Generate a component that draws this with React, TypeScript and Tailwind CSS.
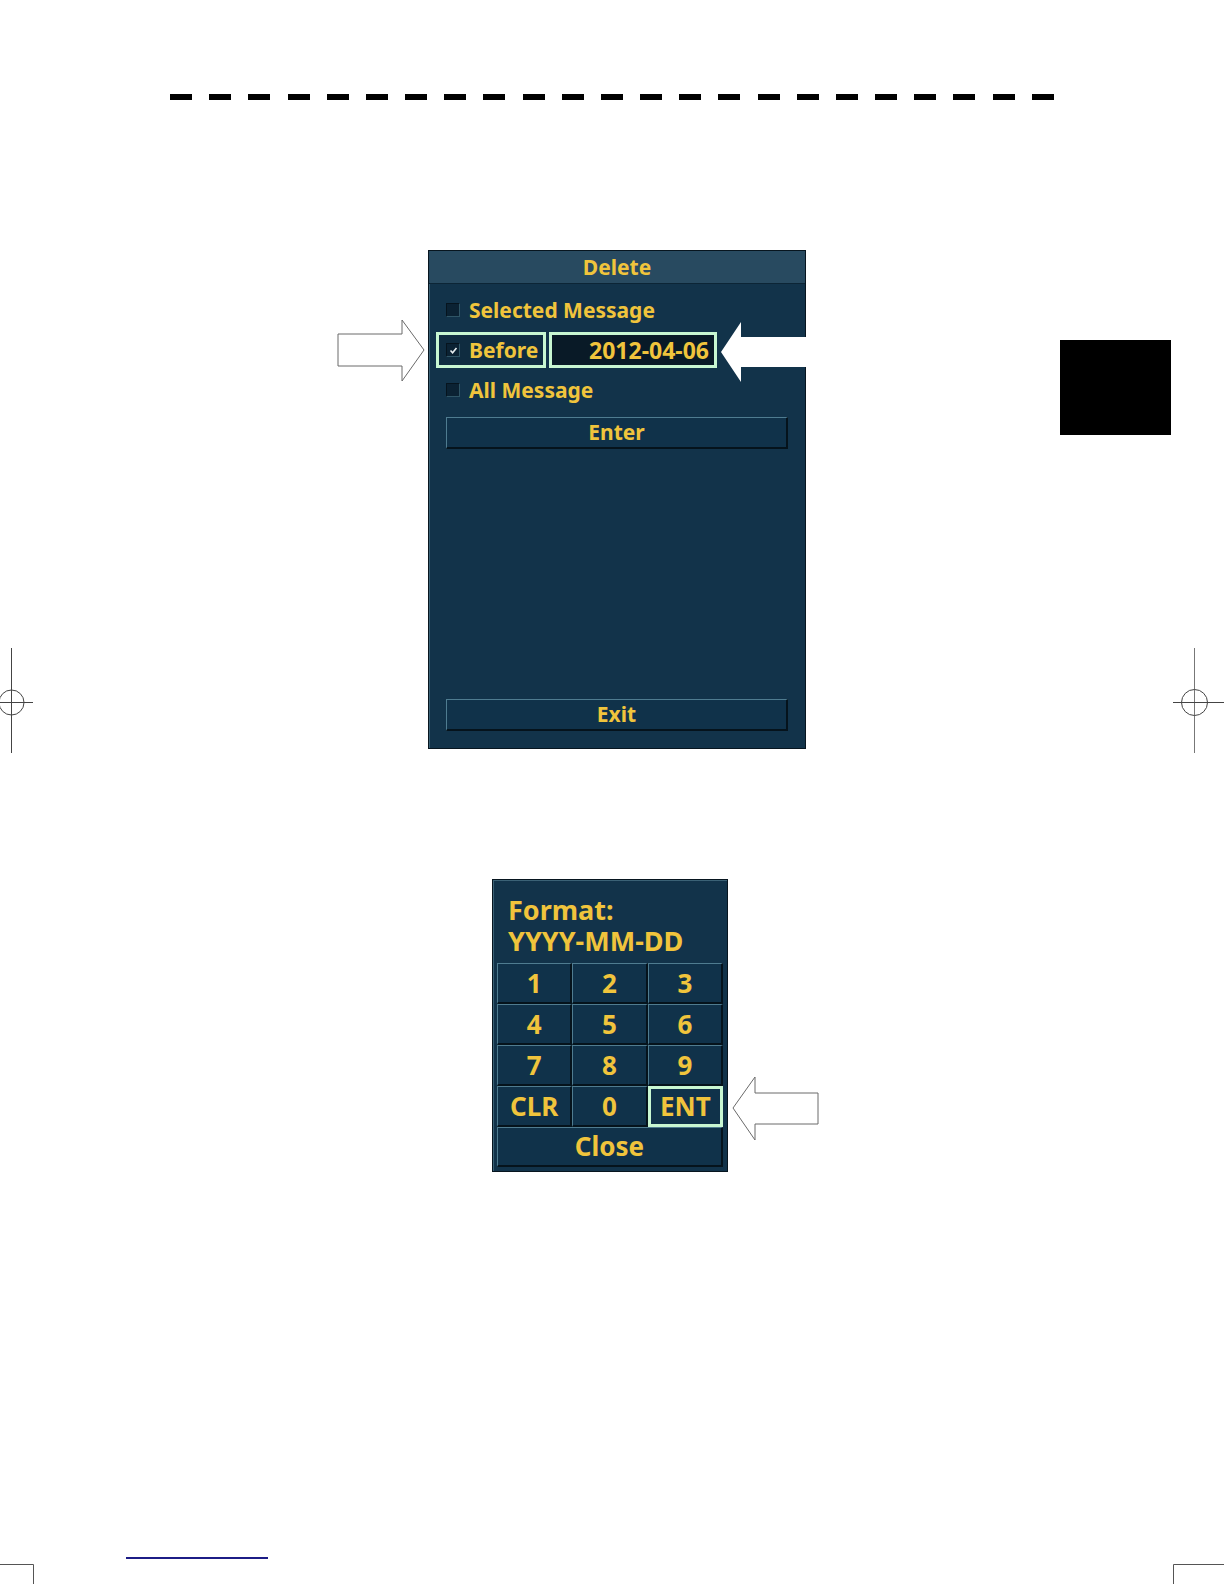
import React from "react";

const Y = "text-[#f0c43c]";

function Check({ checked }: { checked?: boolean }) {
  return (
    <div className="w-[14px] h-[14px] bg-[#0b2233] border border-t-[#06141e] border-l-[#06141e] border-b-[#2f5566] border-r-[#2f5566] flex items-center justify-center shrink-0">
      {checked && (
        <svg width="9" height="9" viewBox="0 0 9 9">
          <path d="M1.5 4.5 L3.6 6.8 L7.5 2" stroke="#e8eef0" strokeWidth="1.6" fill="none" />
        </svg>
      )}
    </div>
  );
}

function Bevel({ children, className = "" }: { children: React.ReactNode; className?: string }) {
  return (
    <div
      className={`bg-[#10324a] border-t border-l border-t-[#4f7c90] border-l-[#4f7c90] border-b-2 border-r-2 border-b-[#05131c] border-r-[#05131c] flex items-center justify-center ${className}`}
    >
      {children}
    </div>
  );
}

function Key({ label, hl }: { label: string; hl?: boolean }) {
  if (hl) {
    return (
      <div className="h-[41px] border-[3px] border-[#c8f7d2] bg-[#10324a] flex items-center justify-center">
        <span className={`${Y} font-bold text-[26px] leading-none`}>{label}</span>
      </div>
    );
  }
  return (
    <Bevel className="h-[41px]">
      <span className={`${Y} font-bold text-[26px] leading-none`}>{label}</span>
    </Bevel>
  );
}

export default function App() {
  const dashes = Array.from({ length: 23 });
  return (
    <div
      className="relative w-[1224px] h-[1584px] bg-white overflow-hidden"
      style={{ fontFamily: '"Noto Sans", "DejaVu Sans", sans-serif' }}
    >
      {/* dashed rule */}
      <div className="pt-[94px] pl-[170px]">
        <div className="w-[884px] h-[6px] flex justify-between">
          {dashes.map((_, i) => (
            <div key={i} className="w-[22px] h-[6px] bg-black" />
          ))}
        </div>
      </div>

      {/* Delete dialog */}
      <div className="mt-[150px] ml-[428px] w-[378px] h-[499px] bg-[#12334a] border border-[#07151f] flex flex-col shadow-[inset_1px_1px_0_#3b6276]">
        <div className="h-[33px] bg-[#284a60] flex items-center justify-center border-b border-[#0c2536]">
          <span className={`${Y} font-bold text-[21px] leading-none`}>Delete</span>
        </div>
        <div className="flex-1 flex flex-col px-[17px] pb-[17px]">
          <div className="h-[32px] mt-[10px] flex items-center">
            <Check />
            <span className={`${Y} font-bold text-[21px] leading-none ml-[9px]`}>Selected Message</span>
          </div>
          <div className="h-[36px] mt-[6px] flex items-center -ml-[10px] gap-[3px]">
            <div className="h-[36px] w-[110px] border-[3px] border-[#c8f7d2] bg-[#0f2c40] flex items-center pl-[7px]">
              <Check checked />
              <span className={`${Y} font-bold text-[21px] leading-none ml-[9px]`}>Before</span>
            </div>
            <div className="h-[36px] w-[168px] border-[3px] border-[#c8f7d2] bg-[#091a27] flex items-center justify-end pr-[5px]">
              <span className={`${Y} font-bold text-[23px] leading-none`}>2012-04-06</span>
            </div>
          </div>
          <div className="h-[32px] mt-[6px] flex items-center">
            <Check />
            <span className={`${Y} font-bold text-[21px] leading-none ml-[9px]`}>All Message</span>
          </div>
          <Bevel className="h-[32px] mt-[11px]">
            <span className={`${Y} font-bold text-[21px] leading-none`}>Enter</span>
          </Bevel>
          <div className="flex-1" />
          <Bevel className="h-[32px]">
            <span className={`${Y} font-bold text-[21px] leading-none`}>Exit</span>
          </Bevel>
        </div>
      </div>

      {/* Keypad dialog */}
      <div className="mt-[130px] ml-[492px] w-[236px] h-[293px] bg-[#12334a] border border-[#07151f] shadow-[inset_1px_1px_0_#3b6276] flex flex-col px-[4px] pb-[4px]">
        <div className="pl-[11px] pt-[14px] h-[84px]">
          <div className={`${Y} font-bold text-[27px] leading-[31px]`}>Format:</div>
          <div className={`${Y} font-bold text-[27px] leading-[31px]`}>YYYY-MM-DD</div>
        </div>
        <div className="grid grid-cols-3">
          {["1", "2", "3", "4", "5", "6", "7", "8", "9", "CLR", "0"].map((k) => (
            <Key key={k} label={k} />
          ))}
          <Key label="ENT" hl />
        </div>
        <Bevel className="h-[41px]">
          <span className={`${Y} font-bold text-[26px] leading-none`}>Close</span>
        </Bevel>
      </div>

      {/* chapter tab */}
      <div className="absolute left-[1060px] top-[340px] w-[111px] h-[95px] bg-black" />

      {/* footer rule */}
      <div className="absolute left-[126px] top-[1557px] w-[142px] h-[2px] bg-[#1c1c86]" />

      {/* arrows and print marks */}
      <svg className="absolute inset-0 pointer-events-none" width="1224" height="1584" viewBox="0 0 1224 1584">
        <polygon
          points="338,334 402,334 402,320 424,350 402,381 402,366 338,366"
          fill="#fff"
          stroke="#6a6a6a"
          strokeWidth="1"
        />
        <polygon points="721,352 741,322 741,337 806,337 806,367 741,367 741,382" fill="#fff" />
        <polygon
          points="733,1108 755,1077 755,1093 818,1093 818,1124 755,1124 755,1140"
          fill="#fff"
          stroke="#6a6a6a"
          strokeWidth="1"
        />
        {/* left registration mark */}
        <line x1="11.5" y1="648" x2="11.5" y2="753" stroke="#444" strokeWidth="1" />
        <line x1="0" y1="702.5" x2="33" y2="702.5" stroke="#444" strokeWidth="1" />
        <circle cx="11.5" cy="702.5" r="12.5" fill="none" stroke="#444" strokeWidth="1" />
        {/* right registration mark */}
        <line x1="1194.5" y1="648" x2="1194.5" y2="753" stroke="#777" strokeWidth="1" />
        <line x1="1173" y1="702.5" x2="1224" y2="702.5" stroke="#444" strokeWidth="1" />
        <circle cx="1194.5" cy="702.5" r="13" fill="none" stroke="#444" strokeWidth="1" />
        {/* bottom corner marks */}
        <polyline points="0,1564.5 33.5,1564.5 33.5,1584" fill="none" stroke="#555" strokeWidth="1" />
        <polyline points="1224,1564.5 1173.5,1564.5 1173.5,1584" fill="none" stroke="#555" strokeWidth="1" />
      </svg>
    </div>
  );
}
